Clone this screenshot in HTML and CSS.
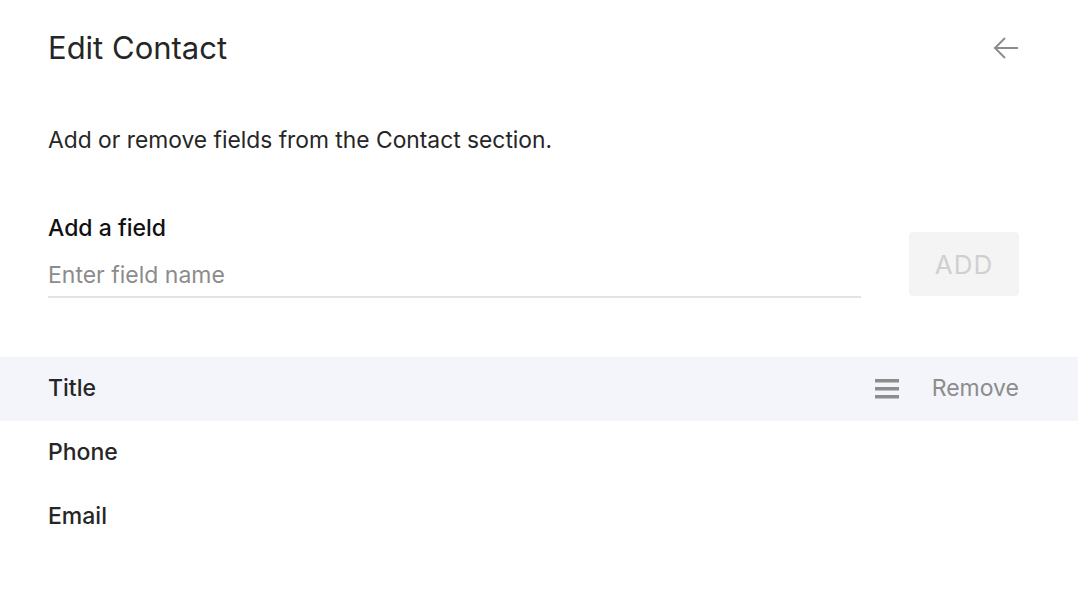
FILE: index.html
```html
<!DOCTYPE html>
<html>
<head>
<meta charset="utf-8">
<link rel="stylesheet" href="styles.css">
</head>
<body>
<div class="panel">
  <header class="head">
    <h1 class="title">Edit Contact</h1>
    <button class="back" aria-label="Back">
      <svg width="28" height="28" viewBox="0 0 28 28"><path d="M26 14H3M13 4L3 14l10 10" fill="none" stroke="#8c8c8c" stroke-width="2"/></svg>
    </button>
  </header>
  <p class="desc">Add or remove fields from the Contact section.</p>
  <div class="add">
    <div class="field">
      <label class="label">Add a field</label>
      <input class="input" placeholder="Enter field name">
    </div>
    <button class="addbtn">ADD</button>
  </div>
  <ul class="list">
    <li class="row active"><span class="name">Title</span>
      <span class="actions">
        <svg class="drag" width="24" height="20" viewBox="0 0 24 20"><rect x="0" y="0" width="24" height="3.5" fill="#8c8c8c"/><rect x="0" y="8" width="24" height="3.5" fill="#8c8c8c"/><rect x="0" y="16" width="24" height="3.5" fill="#8c8c8c"/></svg>
        <span class="remove">Remove</span>
      </span>
    </li>
    <li class="row"><span class="name">Phone</span></li>
    <li class="row"><span class="name">Email</span></li>
  </ul>
</div>
</body>
</html>
```
FILE: styles.css
```css
* { box-sizing: border-box; }
html, body { margin: 0; padding: 0; background: #fff; }
body { font-family: "Inter", "Liberation Sans", sans-serif; color: #262626; }
.panel { width: 1078px; }
.head { display: flex; justify-content: space-between; align-items: center; padding: 24px 58px 0 48px; height: 72px; }
.title { margin: 0; font-size: 31px; line-height: 48px; font-weight: 400; letter-spacing: 0; color: #262626; }
.back { border: 0; background: none; padding: 0; width: 28px; height: 28px; display: flex; }
.desc { margin: 0; padding: 53px 48px 0; font-size: 22.8px; line-height: 30px; color: #262626; }
.add { display: flex; align-items: flex-end; padding: 58px 59px 0 48px; gap: 48px; }
.field { flex: 1; display: flex; flex-direction: column; }
.label { font-size: 23px; font-weight: 500; color: #111; line-height: 30px; }
.input { border: 0; border-bottom: 2px solid #e3e3e3; padding: 18px 0 7px; font: inherit; font-size: 23px; line-height: 28px; outline: none; color: #262626; }
.input::placeholder { color: #8c8c8c; }
.addbtn { width: 110px; height: 64px; border: 0; border-radius: 4px; background: #f4f4f4; color: #d0d0d0; font-family: inherit; font-size: 26px; letter-spacing: 1px; margin-bottom: 2px; }
.list { list-style: none; margin: 59px 0 0; padding: 0; }
.row { height: 64px; display: flex; align-items: center; justify-content: space-between; padding: 0 59px 3px 48px; }
.row.active { background: #f4f5fa; }
.name { font-size: 23px; font-weight: 500; color: #262626; }
.actions { display: flex; align-items: center; gap: 33px; }
.drag { margin-top: 3px; }
.remove { font-size: 23px; color: #8c8c8c; }
```
